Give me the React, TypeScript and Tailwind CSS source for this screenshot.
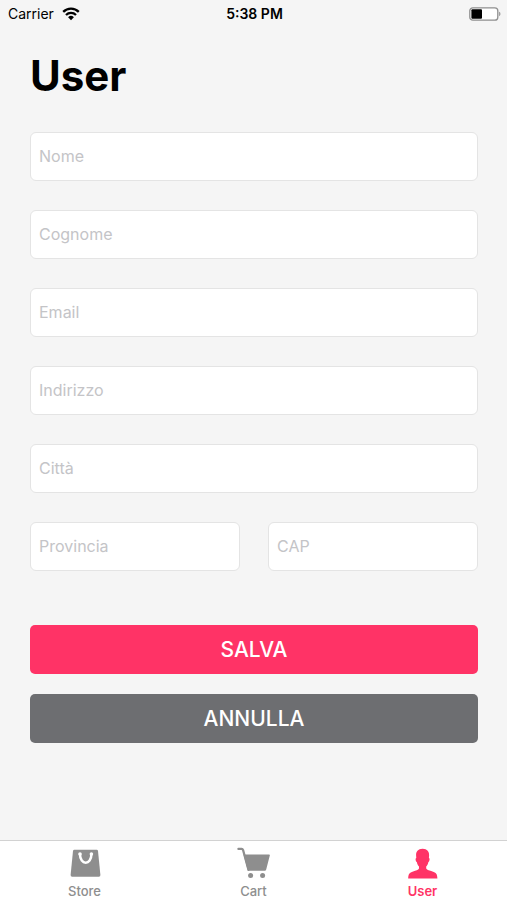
import { useState } from 'react'
import type { FormEvent, ReactNode } from 'react'

const emptyUser = {
    nome: '',
    cognome: '',
    email: '',
    indirizzo: '',
    citta: '',
    provincia: '',
    cap: '',
}

type UserField = keyof typeof emptyUser

const fields: { name: UserField; label: string; half?: boolean }[] = [
    { name: 'nome', label: 'Nome' },
    { name: 'cognome', label: 'Cognome' },
    { name: 'email', label: 'Email' },
    { name: 'indirizzo', label: 'Indirizzo' },
    { name: 'citta', label: 'Città' },
    { name: 'provincia', label: 'Provincia', half: true },
    { name: 'cap', label: 'CAP', half: true },
]

function WifiIcon() {
    return (
        <svg className="w-[18px] h-[14px]" viewBox="0 0 18 14" fill="none" stroke="#000" strokeWidth="2.3" aria-hidden="true">
            <path d="M1.2 4.9a11 11 0 0 1 15.6 0" />
            <path d="M4 8a7.1 7.1 0 0 1 10 0" />
            <path d="M9 13.2 6.1 10.3a4.1 4.1 0 0 1 5.8 0z" fill="#000" stroke="none" />
        </svg>
    )
}

function BatteryIcon() {
    return (
        <svg className="w-8 h-[14px]" viewBox="0 0 32 14" aria-hidden="true">
            <rect x="0.8" y="0.8" width="28" height="12.4" rx="3" fill="#fff" stroke="#8f8f8f" strokeWidth="1.3" />
            <rect x="2.4" y="2.3" width="10.6" height="9.4" rx="1" fill="#000" />
            <path d="M30.2 4.8c1.6.5 1.6 3.9 0 4.4z" fill="#8f8f8f" />
        </svg>
    )
}

function StoreIcon() {
    return (
        <svg className="w-9 h-8" viewBox="0 0 36 32" aria-hidden="true">
            <path d="M7.4 2.7h22.200q1.200 0 1.400 1.200l2.400 24.100q.1 1.800-1.600 1.800H5.200q-1.700 0-1.600-1.800L6 3.900q.2-1.200 1.400-1.200z" fill="#8e8e8e" />
            <path d="M13 7.200c0 11.400 11.400 11.400 11.400 0" fill="none" stroke="#fff" strokeWidth="2.500" strokeLinecap="round" />
            <circle cx="13" cy="7" r="1.800" fill="#fff" />
            <circle cx="24.400" cy="7" r="1.800" fill="#fff" />
        </svg>
    )
}

function CartIcon() {
    return (
        <svg className="w-9 h-8" viewBox="0 0 36 32" aria-hidden="true">
            <path d="M2.400 1.900h3.200q1.100 0 1.500 1.200L12.500 23" fill="none" stroke="#8e8e8e" strokeWidth="2.200" strokeLinecap="round" strokeLinejoin="round" />
            <path d="M7.500 7.600h25.600q1 0 .7 1l-3.600 14q-.3 1.200-1.400 1.200H13q-1.200 0-1.500-1.200z" fill="#8e8e8e" />
            <circle cx="14.600" cy="28.600" r="2.500" fill="#8e8e8e" />
            <circle cx="26.600" cy="28.600" r="2.500" fill="#8e8e8e" />
        </svg>
    )
}

function UserIcon() {
    return (
        <svg className="w-9 h-8" viewBox="0 -1 36 32" aria-hidden="true">
            <path
                d="M17.600.7c4.700 0 6.700 3 6.500 6.700l-.2 2.600c1.100.1.800 3.400-.6 4.200-.4 2-1.100 3.300-2.100 4.300v2.100c.7 1.500 3.500 2.100 6.300 3 3.600 1.100 4.800 2.600 4.900 6.900H3.200c.1-4.300 1.300-5.800 4.900-6.900 2.800-.9 5.200-1.500 5.900-3v-2.100c-1-1-1.700-2.300-2.100-4.300-1.400-.8-1.700-4.100-.6-4.200l-.2-2.600C10.900 3.700 12.900.7 17.600.7z"
                fill="#ff3366"
            />
        </svg>
    )
}

function Tab({ label, icon, active }: { label: string; icon: ReactNode; active?: boolean }) {
    return (
        <a
            href={`#${label.toLowerCase()}`}
            aria-current={active ? 'page' : undefined}
            className={`flex flex-1 flex-col items-center pt-1.5 pb-px text-[13px] leading-4 ${
                active ? 'font-semibold text-[#ff3366]' : 'font-medium text-[#8e8e8e]'
            }`}
        >
            {icon}
            <span className="mt-1">{label}</span>
        </a>
    )
}

export default function App() {
    const [user, setUser] = useState(emptyUser)

    const handleSubmit = (e: FormEvent) => {
        e.preventDefault()
    }

    return (
        <div className="flex min-h-screen flex-col bg-[#f5f5f5] font-['Inter','Liberation_Sans',sans-serif]">
            <header className="grid grid-cols-3 items-center h-7 pl-2 pr-1.5 text-sm text-black">
                <div className="flex items-center gap-2">
                    <span>Carrier</span>
                    <WifiIcon />
                </div>
                <time className="text-center font-semibold">5:38 PM</time>
                <div className="flex justify-end">
                    <BatteryIcon />
                </div>
            </header>

            <main className="flex-1 pl-[30px] pr-[29px] pt-5 pb-8">
                <h1 className="text-[42px] leading-14 font-bold text-black">User</h1>
                <form onSubmit={handleSubmit} className="mt-7">
                    <div className="grid grid-cols-2 gap-x-7 gap-y-[29px]">
                        {fields.map((field) => (
                            <input
                                key={field.name}
                                name={field.name}
                                type={field.name === 'email' ? 'email' : 'text'}
                                aria-label={field.label}
                                placeholder={field.label}
                                value={user[field.name]}
                                onChange={(e) => setUser({ ...user, [field.name]: e.target.value })}
                                className={`w-full min-w-0 h-[49px] px-2 pb-0.5 rounded-md border border-[#e4e4e4] bg-white text-base text-black placeholder:text-[#c4c4c7] focus:outline-none focus:border-[#ff3366] ${
                                    field.half ? 'col-span-1' : 'col-span-2'
                                }`}
                            />
                        ))}
                    </div>
                    <div className="mt-[54px] flex flex-col gap-5">
                        <button type="submit" className="h-[49px] rounded-[5px] bg-[#ff3366] text-[21px] font-medium text-white">
                            SALVA
                        </button>
                        <button
                            type="button"
                            onClick={() => setUser(emptyUser)}
                            className="h-[49px] rounded-[5px] bg-[#6d6e71] text-[21px] font-medium text-white"
                        >
                            ANNULLA
                        </button>
                    </div>
                </form>
            </main>

            <nav className="flex border-t border-[#d2d2d2] bg-white">
                <Tab label="Store" icon={<StoreIcon />} />
                <Tab label="Cart" icon={<CartIcon />} />
                <Tab label="User" icon={<UserIcon />} active />
            </nav>
        </div>
    )
}
